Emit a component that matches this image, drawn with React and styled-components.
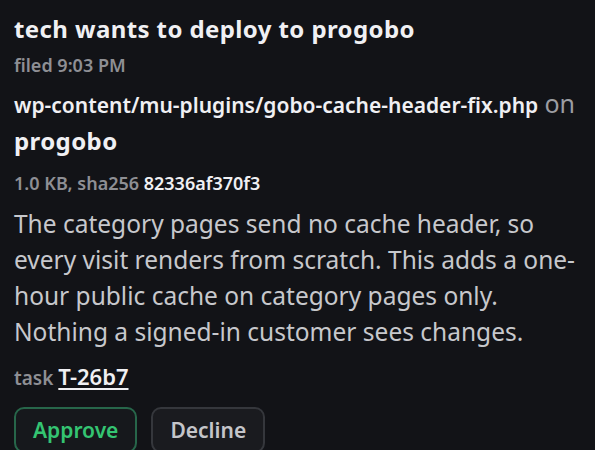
import React from "react";
import styled, { createGlobalStyle } from "styled-components";

const GlobalStyle = createGlobalStyle`
  html, body {
    margin: 0;
    padding: 0;
    background: #121317;
  }
  body {
    font-family: "Noto Sans", "Open Sans", sans-serif;
  }
`;

const Card = styled.div`
  display: flex;
  flex-direction: column;
  align-items: flex-start;
  padding: 13px 14px 0 14px;
  height: 450px;
  box-sizing: border-box;
  overflow: hidden;
  background: #121317;
  color: #ececef;
`;

const Title = styled.h1`
  margin: 0;
  font-size: 24px;
  font-weight: 700;
  letter-spacing: 0.4px;
  line-height: 32px;
  color: #f0f0f3;
`;

const Meta = styled.div`
  margin-top: ${(p) => p.$gap || 0}px;
  font-size: ${(p) => p.$size || 18}px;
  font-weight: 600;
  line-height: 24px;
  color: #8e8f94;
`;

const Target = styled.div`
  margin-top: 8px;
  font-size: 24px;
  line-height: 36px;
`;

const Path = styled.span`
  font-size: 21px;
  font-weight: 600;
  color: #f0f0f3;
`;

const On = styled.span`
  font-size: 25px;
  color: #9c9da2;
`;

const Site = styled.span`
  font-size: 24px;
  font-weight: 700;
  letter-spacing: 0.4px;
  color: #f0f0f3;
`;

const Strong = styled.span`
  color: #f0f0f3;
`;

const Body = styled.p`
  margin: 11px 0 0 0;
  max-width: 562px;
  font-size: 24.5px;
  line-height: 36px;
  color: #c7c8cc;
`;

const TaskLink = styled.a`
  font-size: 22px;
  color: #f0f0f3;
  text-decoration: underline;
  text-decoration-thickness: 2px;
  text-underline-offset: 3px;
`;

const Actions = styled.div`
  display: flex;
  gap: 14px;
  margin-top: 17px;
`;

const Button = styled.button`
  font-family: inherit;
  font-size: 21px;
  font-weight: 600;
  height: 46px;
  padding: 0 17px;
  border-radius: 10px;
  background: ${(p) => (p.$primary ? "#16181c" : "#1a1b1f")};
  border: 2px solid ${(p) => (p.$primary ? "#27664a" : "#35373c")};
  color: ${(p) => (p.$primary ? "#34c472" : "#c4c5c9")};
`;

export default function App() {
  return (
    <>
      <GlobalStyle />
      <Card>
        <Title>tech wants to deploy to progobo</Title>
        <Meta $gap={8}>filed 9:03 PM</Meta>
        <Target>
          <Path>wp-content/mu-plugins/gobo-cache-header-fix.php</Path>{" "}
          <On>on</On> <Site>progobo</Site>
        </Target>
        <Meta $gap={12}>
          1.0 KB, sha256 <Strong>82336af370f3</Strong>
        </Meta>
        <Body>
          The category pages send no cache header, so every visit renders from
          scratch. This adds a one-hour public cache on category pages only.
          Nothing a signed-in customer sees changes.
        </Body>
        <Meta $gap={14} $size={19}>
          task <TaskLink href="#">T-26b7</TaskLink>
        </Meta>
        <Actions>
          <Button $primary>Approve</Button>
          <Button>Decline</Button>
        </Actions>
      </Card>
    </>
  );
}
